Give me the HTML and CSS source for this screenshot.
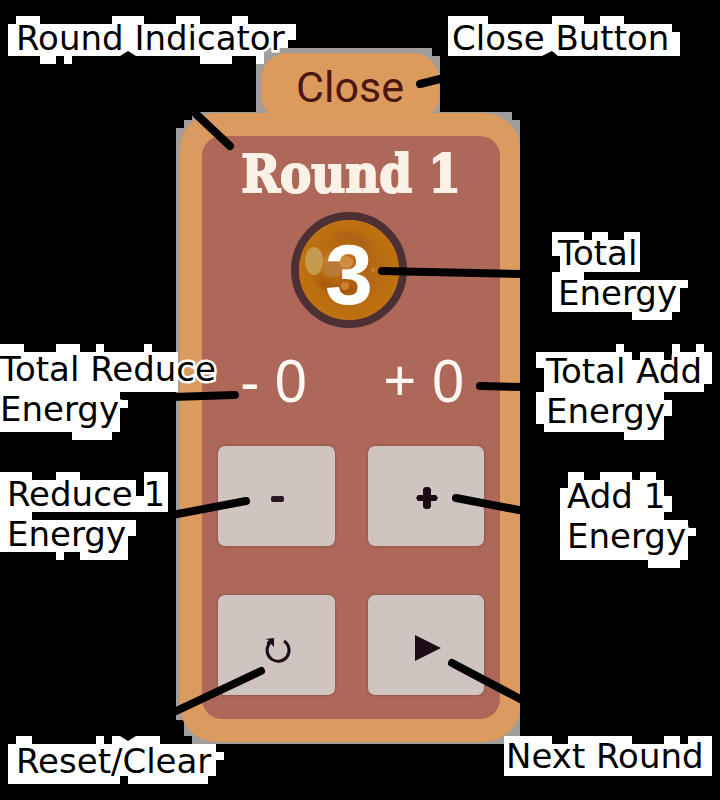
FILE: index.html
```html
<!DOCTYPE html>
<html lang="en">
<head>
<meta charset="utf-8">
<meta name="viewport" content="width=device-width, initial-scale=1">
<title>Energy counter guide</title>
<link rel="stylesheet" href="styles.css">
</head>
<body>
<main class="guide">
  <svg class="layer" viewBox="0 0 720 800" aria-hidden="true">
    <g fill="#a09e9d">
      <path d="M256 112V64h8V48h168v8h8v56h72v8h8v624H192v-8h-8v-16h-8V128h8v-8h8v-8z"/>
    </g>
  </svg>
  <section class="counter">
    <button class="close" type="button">Close</button>
    <div class="frame">
      <div class="panel">
        <h1 class="round">Round 1</h1>
        <div class="coin">
          <svg class="shine" viewBox="0 0 100 100" aria-hidden="true">
            <defs>
              <radialGradient id="amber">
                <stop offset="0" stop-color="#ad6216"/>
                <stop offset=".6" stop-color="#b66a12"/>
                <stop offset="1" stop-color="#c0720f"/>
              </radialGradient>
              <filter id="soft"><feGaussianBlur stdDeviation="3"/></filter>
            </defs>
            <circle cx="50" cy="50" r="50" fill="url(#amber)"/>
            <g filter="url(#soft)">
              <ellipse cx="38" cy="43" rx="16" ry="11" fill="#c98233"/>
              <path d="M20 60Q35 75 58 68" fill="none" stroke="#96490f" stroke-width="4"/>
              <path d="M36 18Q58 10 70 30" fill="none" stroke="#a65a12" stroke-width="4"/>
            </g>
            <ellipse cx="15" cy="41" rx="9" ry="14" fill="#c59b4e"/>
            <ellipse cx="34" cy="49" rx="10" ry="8" fill="#b97833"/>
            <ellipse cx="47" cy="42" rx="7" ry="6" fill="#d18b43"/>
            <circle cx="46" cy="66" r="4" fill="#cf8130"/>
            <circle cx="74" cy="50" r="2" fill="#c58237"/>
          </svg>
          <span class="total">3</span>
        </div>
        <div class="counts">
          <span>- 0</span>
          <span>+ 0</span>
        </div>
        <div class="keys">
          <button class="key" type="button" aria-label="Reduce 1 energy">
            <svg viewBox="0 0 40 40" aria-hidden="true"><rect x="15" y="18" width="13" height="6" rx="2" fill="#2b1822"/></svg>
          </button>
          <button class="key" type="button" aria-label="Add 1 energy">
            <svg viewBox="0 0 40 40" aria-hidden="true"><path d="M19 9h4l2 2v6h5l2 3-2 3h-5v6l-2 2h-4l-2-2v-6h-5l-2-3 2-3h5v-6z" fill="#1c0a16"/></svg>
          </button>
          <button class="key" type="button" aria-label="Reset">
            <svg viewBox="0 0 40 40" aria-hidden="true"><path d="M28 14A11 11 0 1 1 13 17" fill="none" stroke="#1c0c16" stroke-width="3"/><path d="M9 12l9-1v9l-3-3-4 3v-5l2-2z" fill="#1c0c16"/></svg>
          </button>
          <button class="key" type="button" aria-label="Next round">
            <svg viewBox="0 0 40 40" aria-hidden="true"><path d="M9 8L35 21 9 34z" fill="#1c0a16"/></svg>
          </button>
        </div>
      </div>
    </div>
  </section>
  <svg class="layer" viewBox="0 0 720 800" aria-hidden="true">
    <g fill="#fff">
      <path d="M16 16h24v8h72v-8h32v8h32v-8h24v8h32v-8h16v8h48v16h-8v8h-24v16h-8v-8h-24v8h-32v-8H136l-8-5-8 5H72v8h-8v-8h-8v8H40v-8H8V24h8z"/>
      <path d="M448 16h40v8h64v-8h32v8h16v-8h24v8h48v8h8v24H558l-6-5-10 5h-94z"/>
      <path d="M552 232h32v8h8v-8h16v8h16v-8h16v40h-56v8h104v8h-8v24h-8v8h-40v-8h-80v-40h8v-16h-8z"/>
      <path d="M536 352h80v-8h8v8h8v8h8v-8h24v8h8v-16h8v8h16v-8h8v8h8v32h-8v8h-40v8h8v16h-8v24h-40v-8h-80v-8h-8v-32h8v-24h-8z"/>
      <path d="M568 472h16v8h16v-8h32v8h8v-8h16v8h8v16h8v16h-8v8h24v8h8v8h-8v24h-8v8h-32v-8h-88v-72h8z"/>
      <path d="M0 344h24v8h32v-8h24v8h16v-8h8v8h40v-8h8v8h26v40h-58v8h8v8h-8v24h-8v8H72v-8H0z"/>
      <path d="M0 472h32v8h24v-8h24v8h56v16h8v-24h24v40H32v8h104v16h-8v24H80v-8H64v8h-8v-8H0z"/>
      <path d="M16 736h16v8h64v-8h8v8h8v-8h8l8 5 8-5h24v8h56v8h8v8h-8v16h-8v8h-80v-8h-8v8H8V744h8z"/>
      <path d="M504 736h48v8h16v-8h64v8h32v-8h16v8h8v-8h24v40H504z"/>
    </g>
    <g stroke="#000" stroke-width="8" stroke-linecap="round">
      <path d="M196 114L230 146"/>
      <path d="M420 84L444 78"/>
      <path d="M382 271L524 274"/>
      <path d="M480 386L524 387"/>
      <path d="M235 395L172 397"/>
      <path d="M246 501L172 515"/>
      <path d="M456 498L524 511"/>
      <path d="M261 671L172 713"/>
      <path d="M452 663L524 701"/>
    </g>
  </svg>
  <p class="note note-round">Round Indicator</p>
  <p class="note note-close">Close Button</p>
  <p class="note note-total">Total<br>Energy</p>
  <p class="note note-total-add">Total Add<br>Energy</p>
  <p class="note note-add">Add 1<br>Energy</p>
  <p class="note note-total-reduce">Total Reduce<br>Energy</p>
  <p class="note note-reduce">Reduce 1<br>Energy</p>
  <p class="note note-reset">Reset/Clear</p>
  <p class="note note-next">Next Round</p>
</main>
</body>
</html>
```
FILE: styles.css
```css
* {
  box-sizing: border-box;
}

body {
  margin: 0;
  background: #000;
  font-family: "DejaVu Sans", sans-serif;
}

.guide {
  position: relative;
  max-width: 720px;
  min-height: 100vh;
  margin: 0 auto;
  padding: 53px 200px 58px 180px;
  overflow: hidden;
}

.layer {
  position: absolute;
  top: 0;
  left: 0;
  width: 100%;
  pointer-events: none;
}

.counter {
  position: relative;
  display: flex;
  flex-direction: column;
  align-items: center;
}

.close {
  width: 178px;
  padding: 4px 0 0;
  border: 0;
  border-radius: 26px 26px 20px 20px;
  background: #dc9a5d;
  color: #4b1710;
  font: 400 43px/60px Roboto, sans-serif;
}

.frame {
  align-self: stretch;
  margin-top: -4px;
  padding: 23px 20px 23px 22px;
  border-radius: 36px;
  background: #dc9b5e;
}

.panel {
  display: flex;
  flex-direction: column;
  align-items: center;
  padding: 0 16px 24px;
  border-radius: 20px;
  background: #ad685a;
}

.round {
  margin: 0;
  color: #fbf1e6;
  font: bold 52px/76px "DejaVu Serif Condensed", "DejaVu Serif", serif;
  white-space: nowrap;
  -webkit-text-stroke: 2px #fbf1e6;
}

.coin {
  display: grid;
  width: 116px;
  height: 116px;
  margin-right: 4px;
  border: 8px solid #4d3033;
  border-radius: 50%;
}

.shine,
.total {
  grid-area: 1 / 1;
}

.total {
  color: #fff;
  font: bold 86px/108px "Liberation Sans", sans-serif;
  text-align: center;
}

.counts {
  display: grid;
  grid-template-columns: 1fr 1fr;
  align-self: stretch;
  column-gap: 38px;
  margin-bottom: 14px;
  padding-right: 4px;
  color: #fff8f2;
  font: 58px/104px "Noto Sans", sans-serif;
  text-align: center;
  white-space: nowrap;
}

.keys {
  display: grid;
  grid-template-columns: 1fr 1fr;
  align-self: stretch;
  gap: 49px 33px;
}

.key {
  display: grid;
  place-items: center;
  height: 100px;
  padding: 4px 0 0;
  border: 0;
  border-radius: 7px;
  background: #d0c4c1;
  box-shadow: 0 0 3px #7d4840;
}

.key svg {
  width: 40px;
  height: 40px;
}

.note {
  position: absolute;
  margin: 0;
  color: #000;
  font-size: 34px;
  line-height: 40px;
  white-space: nowrap;
  -webkit-text-stroke: 5px #fff;
  paint-order: stroke fill;
}

.note-round { left: 16px; top: 18px; }
.note-close { left: 452px; top: 18px; }
.note-total { left: 558px; top: 233px; }
.note-total-add { left: 546px; top: 351px; }
.note-add { left: 567px; top: 476px; }
.note-total-reduce { left: 0; top: 349px; }
.note-reduce { left: 7px; top: 474px; }
.note-reset { left: 16px; top: 741px; }
.note-next { left: 506px; top: 736px; }
```
